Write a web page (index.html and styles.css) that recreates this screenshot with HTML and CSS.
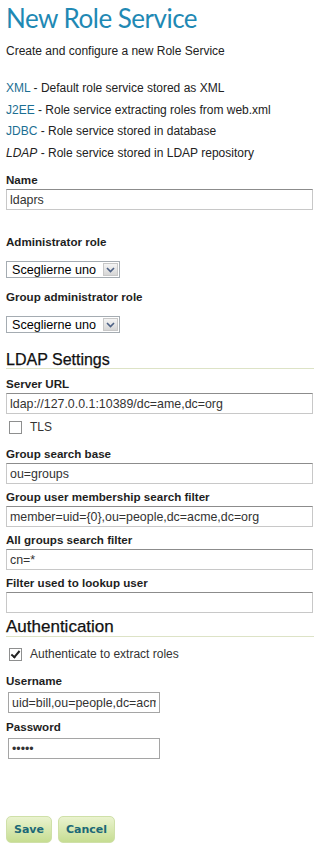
FILE: index.html
```html
<!DOCTYPE html>
<html>
<head>
    <meta name="viewport" content="width=device-width, initial-scale=1">
    <link rel="stylesheet" href="styles.css">
</head>
<body>

<div class="page">
    <h1>New Role Service</h1>
    <p class="intro">Create and configure a new Role Service</p>

    <ul class="types">
        <li><a href="#">XML</a> - Default role service stored as XML</li>
        <li><a href="#">J2EE</a> - Role service extracting roles from web.xml</li>
        <li><a href="#">JDBC</a> - Role service stored in database</li>
        <li><em>LDAP</em> - Role service stored in LDAP repository</li>
    </ul>

    <form>
        <div class="field">
            <label for="name">Name</label>
            <input type="text" id="name" class="wide" value="ldaprs">
        </div>

        <div class="field roles">
            <label>Administrator role</label>
            <div class="select">
                <select><option>Sceglierne uno</option></select>
                <span class="arrow"><svg width="9" height="6" viewBox="0 0 9 6"><path d="M1 1l3.5 3.5L8 1" fill="none" stroke="#4d6185" stroke-width="1.6"/></svg></span>
            </div>
        </div>

        <div class="field roles">
            <label>Group administrator role</label>
            <div class="select">
                <select><option>Sceglierne uno</option></select>
                <span class="arrow"><svg width="9" height="6" viewBox="0 0 9 6"><path d="M1 1l3.5 3.5L8 1" fill="none" stroke="#4d6185" stroke-width="1.6"/></svg></span>
            </div>
        </div>

        <h3 class="section">LDAP Settings</h3>

        <div class="field tight">
            <label for="url">Server URL</label>
            <input type="text" id="url" class="wide" value="ldap://127.0.0.1:10389/dc=ame,dc=org">
        </div>
        <div class="check tls">
            <input type="checkbox" id="tls"><label for="tls">TLS</label>
        </div>

        <div class="field tight">
            <label>Group search base</label>
            <input type="text" class="wide" value="ou=groups">
        </div>
        <div class="field tight">
            <label>Group user membership search filter</label>
            <input type="text" class="wide" value="member=uid={0},ou=people,dc=acme,dc=org">
        </div>
        <div class="field tight">
            <label>All groups search filter</label>
            <input type="text" class="wide" value="cn=*">
        </div>
        <div class="field tight">
            <label>Filter used to lookup user</label>
            <input type="text" class="wide" value="">
        </div>

        <h3 class="section auth">Authentication</h3>

        <div class="check auth-check">
            <input type="checkbox" id="auth" checked><label for="auth">Authenticate to extract roles</label>
        </div>

        <div class="field cred">
            <label>Username</label>
            <input type="text" class="short" value="uid=bill,ou=people,dc=acme,dc=org">
        </div>
        <div class="field cred">
            <label>Password</label>
            <input type="password" class="short" value="12345">
        </div>

        <div class="buttons">
            <button type="button">Save</button>
            <button type="button">Cancel</button>
        </div>
    </form>
</div>

</body>
</html>
```

FILE: styles.css
```css
body {
    margin: 0;
    padding: 0;
    background-color: #fff;
    color: #222;
    font-family: 'Liberation Sans', Arial, sans-serif;
    font-size: 12px;
}
.page {
    padding: 0 6px;
    width: 308px;
}
h1 {
    margin: 0;
    padding-top: 2px;
    font-family: 'Lato', sans-serif;
    font-weight: normal;
    font-size: 26px;
    letter-spacing: -0.5px;
    line-height: 32px;
    color: #1f89b4;
}
.intro {
    margin: 9px 0 0;
    line-height: 16px;
}
.types {
    list-style: none;
    margin: 19px 0 0;
    padding: 0;
}
.types li {
    line-height: 21.5px;
}
.types a {
    color: #1c6f93;
    text-decoration: none;
}
label {
    display: block;
    font-weight: bold;
    font-size: 11.6px;
    line-height: 14px;
    color: #1e1e1e;
}
.field {
    margin-top: 7px;
}
.field label {
    margin-bottom: 2px;
}
form {
    margin-top: 9px;
}
input[type=text], input[type=password] {
    box-sizing: border-box;
    height: 21px;
    padding: 0 3px;
    border: 1px solid #c8c8c8;
    border-top-color: #8c8c8c;
    font-family: 'Liberation Sans', Arial, sans-serif;
    font-size: 12.4px;
    color: #333;
    background: #fff;
}
.wide {
    width: 307px;
}
.short {
    width: 152px;
    margin-left: 2px;
}
input.short {
    border-color: #a5a5a5;
}
.roles {
    margin-top: 25px;
}
.roles + .roles {
    margin-top: 12px;
}
.roles label {
    margin-bottom: 12px;
}
.select {
    display: inline-flex;
    align-items: stretch;
    height: 15px;
    border: 1px solid #a5acb2;
    background: #fff;
}
.select select {
    appearance: none;
    border: none;
    background: #fff;
    padding: 0 4px 0 5px;
    font-family: 'Liberation Sans', Arial, sans-serif;
    font-size: 12.6px;
    color: #000;
    width: 95px;
    outline: none;
}
.arrow {
    display: flex;
    align-items: center;
    justify-content: center;
    width: 15px;
    margin: 1px;
    background: linear-gradient(#f4f4f4, #d6d6d6);
    border: 1px solid #c8c8c8;
    box-sizing: border-box;
}
.section {
    margin: 19px 0 0;
    padding: 0;
    border-bottom: 1px solid #dde3c6;
    font-size: 16px;
    font-weight: normal;
    line-height: 16px;
    color: #111;
    -webkit-text-stroke: 0.25px #111;
}
.section.auth {
    margin-top: 5px;
    font-size: 17px;
    line-height: 18px;
}
.tight {
    margin-top: 6px;
}
.section + .tight {
    margin-top: 8px;
}
.check {
    display: flex;
    align-items: center;
    height: 22px;
    padding-left: 3px;
}
.check.tls {
    margin-top: 2px;
}
.check.tls + .tight {
    margin-top: 9px;
}
.check.auth-check {
    margin-top: 6px;
}
.check input {
    appearance: none;
    box-sizing: border-box;
    margin: 0 8px 0 0;
    width: 13px;
    height: 13px;
    border: 1px solid #8e8f8f;
    background: #fff;
    position: relative;
}
.check input:checked::after {
    content: "";
    position: absolute;
    left: 3px;
    top: 0;
    width: 3px;
    height: 7px;
    border: solid #222;
    border-width: 0 2px 2px 0;
    transform: rotate(40deg);
}
.check label {
    display: inline;
    font-weight: normal;
    font-size: 12px;
    color: #333;
}
.cred {
    margin-top: 9px;
}
.cred + .cred {
    margin-top: 7px;
}
.cred label {
    margin-bottom: 4px;
}
.buttons {
    margin-top: 57px;
    display: flex;
    gap: 6px;
}
button {
    height: 27px;
    padding: 0 7px;
    border: 1px solid #cfe0a8;
    border-radius: 5px;
    background: linear-gradient(#eaf3cf, #c6dd92);
    color: #1c6877;
    font-family: 'DejaVu Sans', Verdana, sans-serif;
    font-weight: bold;
    font-size: 11px;
    cursor: pointer;
}
```
